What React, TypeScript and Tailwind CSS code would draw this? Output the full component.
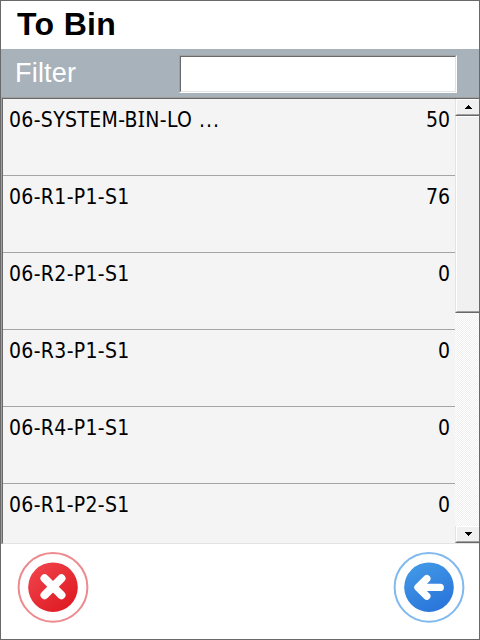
const rows = [
  { bin: "06-SYSTEM-BIN-LO", more: true, qty: 50 },
  { bin: "06-R1-P1-S1", qty: 76 },
  { bin: "06-R2-P1-S1", qty: 0 },
  { bin: "06-R3-P1-S1", qty: 0 },
  { bin: "06-R4-P1-S1", qty: 0 },
  { bin: "06-R1-P2-S1", qty: 0 },
];

function BinName({ name, more }: { name: string; more?: boolean }) {
  return (
    <span className="tracking-[0.33px] whitespace-pre">
      {name.split(/(I)/).map((part, i) =>
        part === "I" ? (
          <span key={i} className="font-['Noto_Sans',sans-serif] leading-none">I</span>
        ) : (
          part
        ),
      )}
      {more && <span className="tracking-[0.9px]"> ...</span>}
    </span>
  );
}

function ScrollButton({ down = false }: { down?: boolean }) {
  return (
    <button
      aria-label={down ? "Scroll down" : "Scroll up"}
      className="flex h-[17px] w-full shrink-0 border-b border-l border-b-[#696969] border-l-[#e3e3e3] bg-[#f0f0f0]"
    >
      <span className="flex h-4 w-full items-center justify-center border-t border-b border-l border-t-white border-b-[#a0a0a0] border-l-white">
        <svg width="7" height="4" viewBox="0 0 7 4" shapeRendering="crispEdges">
          <path d={down ? "M0 0H7V1H6V2H5V3H4V4H3V3H2V2H1V1H0Z" : "M3 0H4V1H5V2H6V3H7V4H0V3H1V2H2V1H3Z"} />
        </svg>
      </span>
    </button>
  );
}

function ScrollBar() {
  return (
    <div className="flex w-6 shrink-0 flex-col bg-[repeating-conic-gradient(#f0f0f0_0_25%,#ffffff_0_50%)] bg-[length:2px_2px]">
      <ScrollButton />
      <div className="h-[197px] shrink-0 border-b border-l border-b-[#696969] border-l-[#e3e3e3] bg-[#f0f0f0]">
        <div className="h-full border-t border-b border-l border-t-white border-b-[#a0a0a0] border-l-white" />
      </div>
      <div className="flex-1" />
      <ScrollButton down />
    </div>
  );
}

function CancelIcon() {
  return (
    <svg width="72" height="72" viewBox="0 0 72 72" fill="none">
      <defs>
        <linearGradient id="red" x1="0.15" y1="0.1" x2="0.85" y2="0.9">
          <stop stopColor="#ef4149" />
          <stop offset="1" stopColor="#df1b23" />
        </linearGradient>
      </defs>
      <circle cx="36" cy="36.3" r="34.4" stroke="#ed8a8e" strokeWidth="2" />
      <circle cx="36" cy="36.2" r="24.8" fill="url(#red)" />
      <path d="M27.6 27.4L44.4 44.2M44.4 27.4L27.6 44.2" stroke="white" strokeWidth="8.2" strokeLinecap="round" />
    </svg>
  );
}

function BackIcon() {
  return (
    <svg width="72" height="72" viewBox="0 0 72 72" fill="none">
      <defs>
        <linearGradient id="blue" x1="0.25" y1="0" x2="0.75" y2="1">
          <stop stopColor="#4299e6" />
          <stop offset="1" stopColor="#2873da" />
        </linearGradient>
      </defs>
      <circle cx="36" cy="36.3" r="34.4" stroke="#80b9ee" strokeWidth="2" />
      <circle cx="36" cy="36.2" r="24.8" fill="url(#blue)" />
      <path d="M33.8 27.6L25 36.4L33.8 45.2M26 36.4H47.2" stroke="white" strokeWidth="7.4" strokeLinecap="round" strokeLinejoin="round" />
    </svg>
  );
}

export default function App() {
  return (
    <main className="flex h-[640px] w-[480px] flex-col overflow-hidden border border-[#696969] bg-white font-['Liberation_Sans',Arial,sans-serif] text-black">
      <header className="h-12 shrink-0 pl-4">
        <h1 className="text-[32px] leading-[46px] font-bold tracking-[0.35px]">To Bin</h1>
      </header>

      <label className="flex h-12 shrink-0 justify-between bg-[#a8b2ba] pt-1.5 pr-[22px] pl-3.5">
        <span className="text-[27px] leading-[36px] tracking-[0.2px] text-white">Filter</span>
        <span className="flex h-[38px] w-[278px] border border-t-[#a0a0a0] border-r-white border-b-white border-l-[#a0a0a0]">
          <input className="w-full border border-t-[#696969] border-r-[#e3e3e3] border-b-[#e3e3e3] border-l-[#696969] bg-white px-1 text-xl outline-none" />
        </span>
      </label>

      <section className="h-[447px] shrink-0 border-t border-l border-[#a0a0a0]">
        <div className="flex h-[446px] border-t border-b border-l border-t-[#696969] border-b-[#e3e3e3] border-l-[#696969]">
          <ul className="h-[444px] flex-1 overflow-hidden bg-[#f4f4f4] font-['DejaVu_Sans_Condensed','DejaVu_Sans',sans-serif] text-[21px] leading-[25px] [font-stretch:condensed]">
            {rows.map((row) => (
              <li key={row.bin} className="flex h-[77px] justify-between border-b border-[#a5a5a5] pt-[9px] pr-[5px] pl-1.5">
                <BinName name={row.bin} more={row.more} />
                <span>{row.qty}</span>
              </li>
            ))}
          </ul>
          <ScrollBar />
        </div>
      </section>

      <footer className="flex flex-1 items-start justify-between pt-[7px] pr-3.5 pl-4">
        <button aria-label="Cancel"><CancelIcon /></button>
        <button aria-label="Back"><BackIcon /></button>
      </footer>
    </main>
  );
}
